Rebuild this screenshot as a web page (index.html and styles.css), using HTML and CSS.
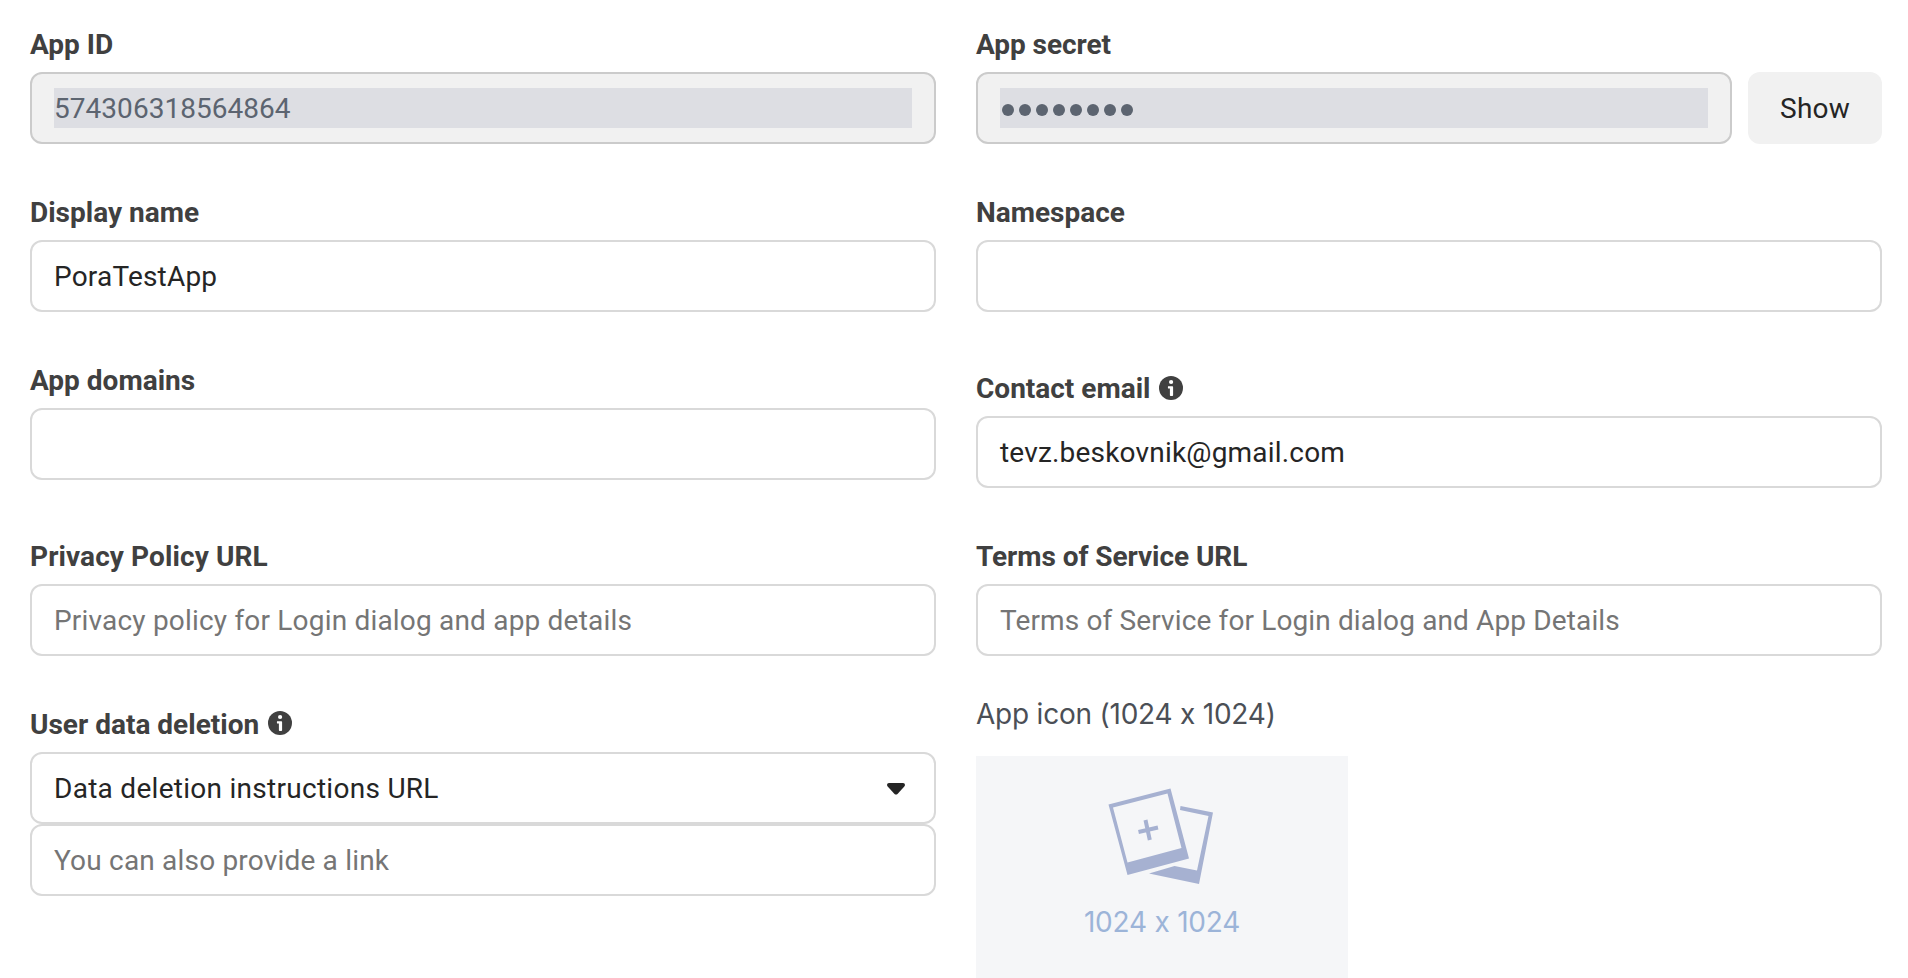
FILE: index.html
```html
<!DOCTYPE html>
<html lang="en">
<head>
<meta charset="utf-8">
<title>App settings</title>
<link rel="stylesheet" href="styles.css">
</head>
<body>
<main class="settings">
  <section class="column">
    <div class="field">
      <label class="label">App ID</label>
      <div class="input disabled"><span class="value">574306318564864</span></div>
    </div>
    <div class="field">
      <label class="label">Display name</label>
      <div class="input">PoraTestApp</div>
    </div>
    <div class="field tall">
      <label class="label">App domains</label>
      <div class="input"></div>
    </div>
    <div class="field">
      <label class="label loose">Privacy Policy URL</label>
      <div class="input placeholder">Privacy policy for Login dialog and app details</div>
    </div>
    <div class="field">
      <label class="label">User data deletion
        <svg class="info raised" viewBox="0 0 24 24"><circle cx="12" cy="12" r="12" fill="#404040"/><circle cx="12.100" cy="6" r="2.100" fill="#fff"/><path d="M9 10.200h4.100c.6 0 1 .4 1 1v7.900c0 .6-.5 1-1 1h-1.200c-.6 0-1-.4-1-1v-6.500H9.800c-.6 0-.9-.4-.9-.9z" fill="#fff"/></svg>
      </label>
      <div class="input select">Data deletion instructions URL
        <svg class="caret" viewBox="0 0 18 12"><path d="M2 0h14c1.900 0 2.600 2.200 1.300 3.600L10.500 10.900c-.9.900-2.100.9-3 0L.7 3.600C-.6 2.200.1 0 2 0z" fill="#252525"/></svg>
      </div>
      <div class="input placeholder">You can also provide a link</div>
    </div>
  </section>
  <section class="column">
    <div class="field">
      <label class="label tight">App secret</label>
      <div class="secret">
        <div class="input disabled"><span class="value dots"><i></i><i></i><i></i><i></i><i></i><i></i><i></i><i></i></span></div>
        <button class="show">Show</button>
      </div>
    </div>
    <div class="field tall">
      <label class="label">Namespace</label>
      <div class="input"></div>
    </div>
    <div class="field">
      <label class="label">Contact email
        <svg class="info" viewBox="0 0 24 24"><circle cx="12" cy="12" r="12" fill="#404040"/><circle cx="12.100" cy="6" r="2.100" fill="#fff"/><path d="M9 10.200h4.100c.6 0 1 .4 1 1v7.900c0 .6-.5 1-1 1h-1.200c-.6 0-1-.4-1-1v-6.500H9.800c-.6 0-.9-.4-.9-.9z" fill="#fff"/></svg>
      </label>
      <div class="input">tevz.beskovnik@gmail.com</div>
    </div>
    <div class="field last">
      <label class="label tight">Terms of Service URL</label>
      <div class="input placeholder terms">Terms of Service for Login dialog and App Details</div>
    </div>
    <div class="icon-title">App icon (1024 x 1024)</div>
    <div class="dropzone">
      <svg class="photos" viewBox="0 0 104 95">
        <g fill="#a6b1d1">
          <path fill-rule="evenodd" d="M-.5 15.500 61.500-.5 80 69.500 18.500 86zM4 18.500 18.500 73.500 72.500 59 58.500 4.500z"/>
          <path d="M71.500 17 104 23.500 90 95 40 84.500 65.500 77 88 81.500 99.500 27 71 21z"/>
        </g>
        <path d="M40.800 51 36.500 31M29.500 43 49 38.500" stroke="#a6b1d1" stroke-width="4" fill="none"/>
      </svg>
      <span class="size">1024 x 1024</span>
    </div>
  </section>
</main>
</body>
</html>
```

FILE: styles.css
```css
* { box-sizing: border-box; }
body {
  margin: 0;
  height: 978px;
  overflow: hidden;
  background: #fff;
  color: #252525;
  font: 28px/40px Roboto, sans-serif;
}
.settings {
  display: grid;
  grid-template-columns: 906px 906px;
  gap: 40px;
  padding: 24px 26px 0 30px;
}
.field { margin-bottom: 48px; }
.field.tall { margin-bottom: 56px; }
.field.last { margin-bottom: 38px; }
.column > .field:last-child { margin-bottom: 0; }
.label {
  display: flex;
  align-items: center;
  gap: 9px;
  height: 40px;
  margin-bottom: 8px;
  padding-top: 2px;
  color: #404040;
  font-weight: 700;
}
.loose { letter-spacing: 0.1px; }
.tight { letter-spacing: -0.06px; }
.info { width: 24px; height: 24px; margin-top: -2px; }
.info.raised { margin-top: -4px; }
.input {
  display: flex;
  align-items: center;
  height: 72px;
  padding: 2px 22px 0;
  border: 2px solid #d9d9d9;
  border-radius: 12px;
  background: #fff;
  letter-spacing: 0.19px;
}
.placeholder { color: #757575; }
.terms { letter-spacing: 0.13px; }
.disabled {
  flex: 1;
  padding-top: 0;
  border-color: #cbcbcb;
  background: #f1f1f1;
  letter-spacing: 0.04px;
}
.value {
  flex: 1;
  height: 40px;
  padding-top: 1px;
  background: #dddee3;
  color: #5c6470;
}
.dots {
  display: flex;
  align-items: center;
  gap: 5px;
  padding: 4px 0 0 2px;
}
.dots i {
  width: 12px;
  height: 12px;
  border-radius: 50%;
  background: #5c6470;
}
.secret { display: flex; gap: 16px; }
.show {
  width: 134px;
  height: 72px;
  padding: 2px 0 0;
  border: 0;
  border-radius: 12px;
  background: #f1f1f1;
  color: #252525;
  font: inherit;
  letter-spacing: 0.2px;
}
.select {
  justify-content: space-between;
  padding-right: 29px;
  letter-spacing: 0.28px;
}
.caret { width: 18px; height: 12px; margin-top: -1px; }
.icon-title,
.size {
  font-family: Inter, sans-serif;
  font-feature-settings: "calt" 0;
  letter-spacing: -0.22px;
}
.icon-title {
  height: 62px;
  color: #4b4f56;
}
.dropzone {
  display: flex;
  flex-direction: column;
  align-items: center;
  width: 372px;
  height: 222px;
  padding-top: 33px;
  background: #f5f6f8;
}
.photos { width: 104px; height: 95px; margin-right: 2px; overflow: visible; }
.size { margin-top: 18px; color: #9cb4d8; }
```
